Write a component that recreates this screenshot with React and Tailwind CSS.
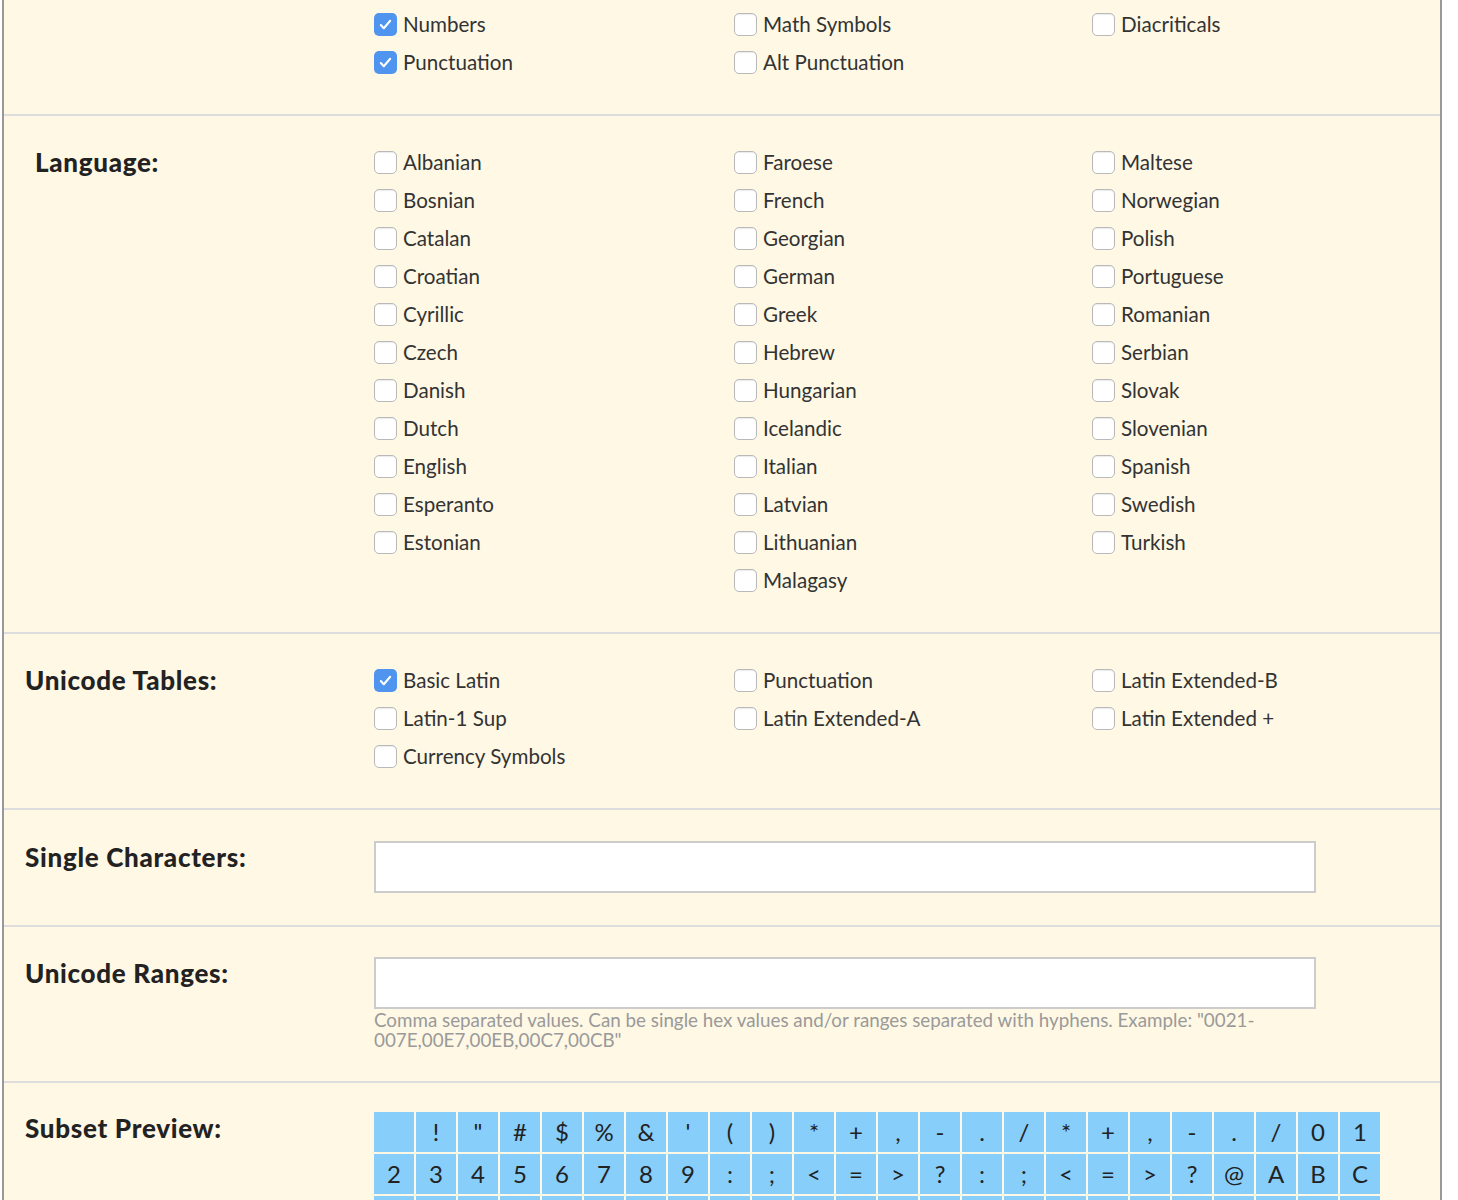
import React from 'react';

const FONT = { fontFamily: 'Lato, "Open Sans", "Liberation Sans", sans-serif' };

const Check = ({ label, checked }) => (
    <label className="flex items-center h-[38px] gap-[6px] text-[20.6px] text-[#333]">
        {checked ? (
            <span className="w-[23px] h-[23px] rounded-[5px] bg-[#4f94ef] flex items-center justify-center">
                <svg width="15" height="15" viewBox="0 0 16 16" fill="none">
                    <path d="M3 8.5l3.2 3.5L13 4" stroke="white" strokeWidth="2.2" strokeLinecap="round" strokeLinejoin="round" />
                </svg>
            </span>
        ) : (
            <span className="w-[23px] h-[23px] rounded-[5px] bg-white border border-[#b9b9b9] shadow-[inset_0_1px_1px_rgba(0,0,0,0.08)]" />
        )}
        <span>{label}</span>
    </label>
);

const Columns = ({ cols }) => (
    <div className="flex">
        {cols.map((col, i) => (
            <div key={i} className={i === 0 ? 'w-[360px] flex flex-col' : i === 1 ? 'w-[358px] flex flex-col' : 'flex-1 flex flex-col'}>
                {col.map(item => (
                    <Check key={item[0]} label={item[0]} checked={item[1]} />
                ))}
            </div>
        ))}
    </div>
);

const Section = ({ label, indent, className, labelClass, children }) => (
    <div className={`flex border-b-2 border-[#dddddd] ${className}`}>
        <div className={`w-[370px] shrink-0 ${indent ? 'pl-[31px]' : 'pl-[21px]'}`}>
            {label && (
                <div className={`text-[26px] font-black tracking-[0.7px] text-[#222] leading-[38px] ${labelClass || ''}`}>{label}</div>
            )}
        </div>
        <div className="flex-1">{children}</div>
    </div>
);

const u = (arr, checked = []) => arr.map(x => [x, checked.includes(x)]);

const row1 = [' ', '!', '"', '#', '$', '%', '&', "'", '(', ')', '*', '+', ',', '-', '.', '/', '*', '+', ',', '-', '.', '/', '0', '1'];
const row2 = ['2', '3', '4', '5', '6', '7', '8', '9', ':', ';', '<', '=', '>', '?', ':', ';', '<', '=', '>', '?', '@', 'A', 'B', 'C'];
const row3 = ['D', 'E', 'F', 'G', 'H', 'I', 'J', 'K', 'L', 'M', 'N', 'O', 'P', 'Q', 'R', 'S', 'T', 'U', 'V', 'W', 'X', 'Y', 'Z', '['];

export default function App() {
    return (
        <div className="bg-white min-h-screen" style={FONT}>
            <div className="ml-[2px] w-[1440px] bg-[#fef8e5] border-x-2 border-[#999999]">
                {/* Character sets */}
                <Section className="pt-[5px] pb-[33px]">
                    <Columns
                        cols={[
                            u(['Numbers', 'Punctuation'], ['Numbers', 'Punctuation']),
                            u(['Math Symbols', 'Alt Punctuation']),
                            u(['Diacriticals']),
                        ]}
                    />
                </Section>

                {/* Language */}
                <Section label="Language:" indent className="pt-[27px] pb-[33px]">
                    <Columns
                        cols={[
                            u(['Albanian', 'Bosnian', 'Catalan', 'Croatian', 'Cyrillic', 'Czech', 'Danish', 'Dutch', 'English', 'Esperanto', 'Estonian']),
                            u(['Faroese', 'French', 'Georgian', 'German', 'Greek', 'Hebrew', 'Hungarian', 'Icelandic', 'Italian', 'Latvian', 'Lithuanian', 'Malagasy']),
                            u(['Maltese', 'Norwegian', 'Polish', 'Portuguese', 'Romanian', 'Serbian', 'Slovak', 'Slovenian', 'Spanish', 'Swedish', 'Turkish']),
                        ]}
                    />
                </Section>

                {/* Unicode tables */}
                <Section label="Unicode Tables:" className="pt-[27px] pb-[33px]">
                    <Columns
                        cols={[
                            u(['Basic Latin', 'Latin-1 Sup', 'Currency Symbols'], ['Basic Latin']),
                            u(['Punctuation', 'Latin Extended-A']),
                            u(['Latin Extended-B', 'Latin Extended +']),
                        ]}
                    />
                </Section>

                <Section label="Single Characters:" labelClass="-mt-[3px]" className="pt-[31px] pb-[32px]">
                    <input type="text" className="block w-[942px] h-[52px] bg-white border-2 border-[#cccccc] outline-none px-2 text-[20px]" />
                </Section>

                <Section label="Unicode Ranges:" labelClass="-mt-[3px]" className="pt-[30px] pb-[31px]">
                    <input type="text" className="block w-[942px] h-[52px] bg-white border-2 border-[#cccccc] outline-none px-2 text-[20px]" />
                    <p className="text-[18.8px] leading-[20px] text-[#9a9a9a] mt-[1px]">
                        Comma separated values. Can be single hex values and/or ranges separated with hyphens. Example: "0021-
                        <br />
                        007E,00E7,00EB,00C7,00CB"
                    </p>
                </Section>

                <Section label="Subset Preview:" labelClass="-mt-[3px]" className="pt-[29px] pb-[30px]">
                    <div className="grid grid-cols-[repeat(24,40px)] gap-[2px]">
                        {[...row1, ...row2, ...row3].map((c, i) => (
                            <div key={i} className="h-[40px] bg-[#87cefa] flex items-center justify-center text-[24px] text-[#222]">
                                {c}
                            </div>
                        ))}
                    </div>
                </Section>
            </div>
        </div>
    );
}
